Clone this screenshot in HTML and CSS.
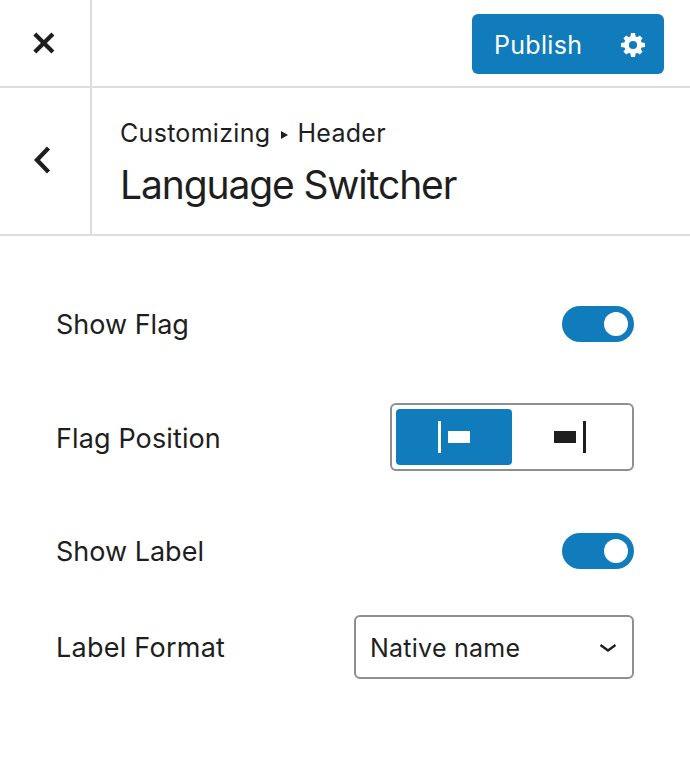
FILE: index.html
```html
<!DOCTYPE html>
<html lang="en">
<head>
<meta charset="utf-8">
<title>Language Switcher</title>
<link rel="stylesheet" href="styles.css">
</head>
<body>
<header class="topbar">
  <button class="side close" aria-label="Close"><svg width="90" height="86" viewBox="0 0 90 86"><path d="M34.800 34 52.900 52.100M52.900 34 34.800 52.100" stroke="#1e1e1e" stroke-width="4.200" stroke-linecap="butt" fill="none"/></svg></button>
  <div class="publish"><span class="publish-text">Publish</span>
    <svg class="gear" width="26" height="26" viewBox="-13 -13 26 26"><g fill="#fff"><path id="tooth" d="M-2-12H2L2.800-7V7L2 12H-2L-2.800 7V-7Z"/><use href="#tooth" transform="rotate(45) scale(1 .96)"/><use href="#tooth" transform="rotate(90)"/><use href="#tooth" transform="rotate(135) scale(1 .96)"/><circle r="8.900"/></g><circle r="4.100" fill="#117cbb"/></svg>
  </div>
</header>
<section class="heading">
  <button class="side back" aria-label="Back"><svg width="90" height="146" viewBox="0 0 90 146"><path d="M48.500 60 37 72 48.500 84" stroke="#1e1e1e" stroke-width="4.300" fill="none"/></svg></button>
  <div class="titles">
    <div class="crumb"><span>Customizing</span><svg class="arrow" width="7" height="8" viewBox="0 0 7 8"><path d="M0 0 7 4 0 8Z" fill="#1e1e1e"/></svg><span>Header</span></div>
    <h1>Language Switcher</h1>
  </div>
</section>
<main>
  <div class="row flag"><span>Show Flag</span><i class="toggle"></i></div>
  <div class="row position"><span class="position-name">Flag Position</span>
    <div class="segment">
      <div class="option active"><svg width="116" height="56" viewBox="0 0 116 56"><path d="M42 12h3v32h-3zM52 22h22v12H52z" fill="#fff"/></svg></div>
      <div class="option"><svg width="116" height="56" viewBox="0 0 116 56"><path d="M69 12h3v32h-3zM40 22h22v12H40z" fill="#1e1e1e"/></svg></div>
    </div>
  </div>
  <div class="row label"><span>Show Label</span><i class="toggle"></i></div>
  <div class="row format"><span class="format-name">Label Format</span>
    <div class="select"><span>Native name</span><svg width="18" height="10" viewBox="0 0 18 10"><path d="M1.500 2 9 7.500 16.500 2" fill="none" stroke="#1e1e1e" stroke-width="2.300"/></svg></div>
  </div>
</main>
</body>
</html>
```
FILE: styles.css
```css
* { box-sizing: border-box; }
body { margin: 0; width: 690px; height: 776px; overflow: hidden; background: #fff; color: #1e1e1e; font-family: Inter, sans-serif; font-size: 25px; }
.topbar { display: flex; height: 88px; border-bottom: 2px solid #ddd; }
.side { width: 92px; padding: 0; border: 0; border-right: 2px solid #ddd; background: none; flex: none; }
.side svg { display: block; }
.publish { display: flex; align-items: center; justify-content: space-between; width: 192px; height: 60px; margin: 14px 26px 0 auto; padding: 2px 18px 0 22px; border-radius: 6px; background: #117cbb; color: #fff; }
.publish-text { letter-spacing: .3px; }
.heading { display: flex; height: 148px; border-bottom: 2px solid #ddd; }
.titles { padding: 29px 0 0 28px; }
.crumb { display: flex; align-items: center; height: 32px; letter-spacing: .3px; }
.arrow { margin: 3px 9px 0 11px; }
h1 { margin: 11px 0 0; font-size: 39px; line-height: 50px; font-weight: 400; letter-spacing: -1.1px; }
main { padding: 70px 56px 0; }
.row { display: flex; align-items: center; justify-content: space-between; font-size: 27px; letter-spacing: 0; }
.flag, .label { height: 36px; }
.position { height: 68px; margin: 61px 0 62px; }
.position-name { padding-top: 2px; letter-spacing: .12px; }
.format { height: 64px; margin-top: 46px; }
.format-name { letter-spacing: .25px; }
.toggle { width: 72px; height: 36px; padding: 6px; border-radius: 18px; background: #117cbb; }
.toggle::after { content: ""; display: block; width: 24px; height: 24px; margin-left: auto; border-radius: 50%; background: #fff; }
.segment { display: flex; gap: 2px; width: 244px; height: 68px; padding: 4px; border: 2px solid #8f8f8f; border-radius: 6px; }
.option { width: 116px; height: 56px; border-radius: 4px; }
.option svg { display: block; }
.active { background: #117cbb; }
.select { display: flex; align-items: center; justify-content: space-between; width: 280px; height: 64px; padding: 2px 15px 0 14px; border: 2px solid #8f8f8f; border-radius: 6px; font-size: 25px; letter-spacing: .25px; }
```
